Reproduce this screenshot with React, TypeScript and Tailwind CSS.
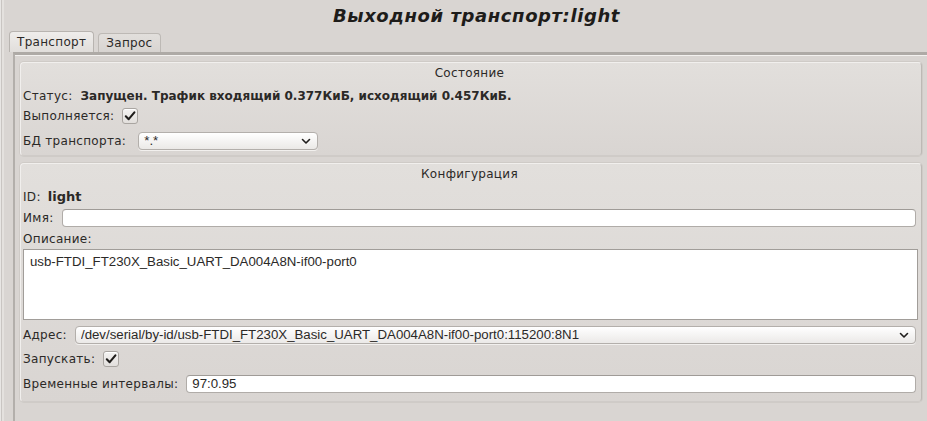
import { ReactNode } from 'react'

const INPUT_FONT = "font-['Liberation_Sans',Arial,sans-serif] text-[13.25px]"

function Check() {
    return (
        <div className="w-[16px] h-[16px] rounded-[3px] border border-[#a9a5a1] bg-gradient-to-b from-[#f4f3f2] to-[#e2dfdc] flex items-center justify-center shadow-[inset_0_1px_0_#ffffff]">
            <svg width="12" height="12" viewBox="0 0 12 12">
                <path d="M1.8 6.3 L4.7 9.2 L10.4 2.4" fill="none" stroke="#1f1d1b" strokeWidth="2.1" strokeLinecap="round" strokeLinejoin="round" />
            </svg>
        </div>
    )
}

function Chevron() {
    return (
        <svg width="10" height="7" viewBox="0 0 10 7" className="shrink-0">
            <path d="M1.5 1.5 L5 5 L8.5 1.5" fill="none" stroke="#1f1d1b" strokeWidth="1.6" strokeLinecap="round" strokeLinejoin="round" />
        </svg>
    )
}

function Select({ value, className = '' }: { value: string; className?: string }) {
    return (
        <div className={`h-[18px] rounded-[4px] border border-[#b3afab] bg-gradient-to-b from-[#ffffff] to-[#ebe9e7] flex items-center pl-[5px] pr-[6px] shadow-[0_1px_0_#f2f0ee] ${className}`}>
            <span className={`flex-1 truncate ${INPUT_FONT} leading-[16px]`}>{value}</span>
            <Chevron />
        </div>
    )
}

function Input({ value = '', className = '' }: { value?: string; className?: string }) {
    return (
        <div className={`h-[18px] rounded-[4px] border border-[#b0aca8] border-t-[#9f9b97] bg-white flex items-center pl-[5px] ${INPUT_FONT} leading-[16px] ${className}`}>
            {value}
        </div>
    )
}

function Row({ label, children, className = '' }: { label: string; children?: ReactNode; className?: string }) {
    return (
        <div className={`flex items-center gap-[8px] ${className}`}>
            <span className="whitespace-nowrap tracking-[0.3px]">{label}</span>
            {children}
        </div>
    )
}

function GroupBox({ title, children, className = '' }: { title: string; children: ReactNode; className?: string }) {
    return (
        <div className={`rounded-[4px] border border-[#f1efed] border-r-[#bdb9b5] border-b-[#cfcbc8] bg-gradient-to-b from-[#e2dfdc] to-[#d9d5d2] shadow-[0_0_0_1px_#cfcbc7] pl-[2px] pr-[5px] ${className}`}>
            <div className="h-[20px] flex items-center justify-center tracking-[0.3px]">{title}</div>
            {children}
        </div>
    )
}

export default function App() {
    return (
        <div className="w-[927px] h-[421px] overflow-hidden bg-[#d9d5d2] flex font-['DejaVu_Sans',sans-serif] text-[12px] text-[#2b2927]">
            {/* window edge */}
            <div className="w-[4px] shrink-0 border-l border-[#e8e6e4] bg-[#c9c5c2] border-r-[2px] border-r-[#e4e1de]" />

            <div className="flex-1 flex flex-col min-w-0">
                {/* Title */}
                <div className="h-[31px] flex items-center justify-center pl-[22px] pb-[1px] text-[18px] font-bold italic tracking-[0.6px] text-[#1e1c1a]">
                    Выходной транспорт:light
                </div>

                {/* Tabs */}
                <div className="h-[21px] flex items-end pl-[5px] gap-[4px]">
                    <div className="h-[21px] px-[7px] rounded-t-[4px] border border-b-0 border-[#b8b4b0] bg-gradient-to-b from-[#efedeb] to-[#e1dedb] flex items-center tracking-[0.3px]">
                        Транспорт
                    </div>
                    <div className="h-[19px] px-[7px] rounded-t-[4px] border border-b-0 border-[#bdb9b5] bg-gradient-to-b from-[#e2dfdc] to-[#d8d4d1] flex items-center tracking-[0.3px]">
                        Запрос
                    </div>
                </div>

                {/* Tab pane */}
                <div className="flex-1 ml-[9px] border-t-[3px] border-t-[#aeaaa6] border-l-[2px] border-l-[#b3afab] shadow-[inset_0_1px_0_#f3f1ef] pl-[5px] pt-[7px] pr-[5px]">
                    <GroupBox title="Состояние" className="pb-[5px]">
                        <Row label="Статус:" className="h-[18px] mt-[4px]">
                            <span className="font-bold tracking-normal">Запущен. Трафик входящий 0.377КиБ, исходящий 0.457КиБ.</span>
                        </Row>
                        <Row label="Выполняется:" className="h-[18px] mt-[2px]">
                            <Check />
                        </Row>
                        <Row label="БД транспорта:" className="h-[18px] mt-[7px]">
                            <Select value="*.*" className="w-[180px] ml-[4px]" />
                        </Row>
                    </GroupBox>

                    <GroupBox title="Конфигурация" className="mt-[7px] h-[239px]">
                        <Row label="ID:" className="h-[18px] mt-[4px]">
                            <span className="font-bold text-[13px] -ml-[1px]">light</span>
                        </Row>
                        <Row label="Имя:" className="h-[18px] mt-[3px]">
                            <Input className="flex-1" />
                        </Row>
                        <Row label="Описание:" className="h-[18px] mt-[3px]" />
                        <div className="h-[71px] mt-[1px] mr-[-2px] border border-[#a19d99] bg-white pl-[6px] pt-[4px] leading-[16px]">
                            <span className={INPUT_FONT}>usb-FTDI_FT230X_Basic_UART_DA004A8N-if00-port0</span>
                        </div>
                        <Row label="Адрес:" className="h-[18px] mt-[6px]">
                            <Select value="/dev/serial/by-id/usb-FTDI_FT230X_Basic_UART_DA004A8N-if00-port0:115200:8N1" className="flex-1" />
                        </Row>
                        <Row label="Запускать:" className="h-[18px] mt-[6px]">
                            <Check />
                        </Row>
                        <Row label="Временные интервалы:" className="h-[18px] mt-[7px]">
                            <Input value="97:0.95" className="flex-1" />
                        </Row>
                    </GroupBox>
                </div>
            </div>
        </div>
    )
}
